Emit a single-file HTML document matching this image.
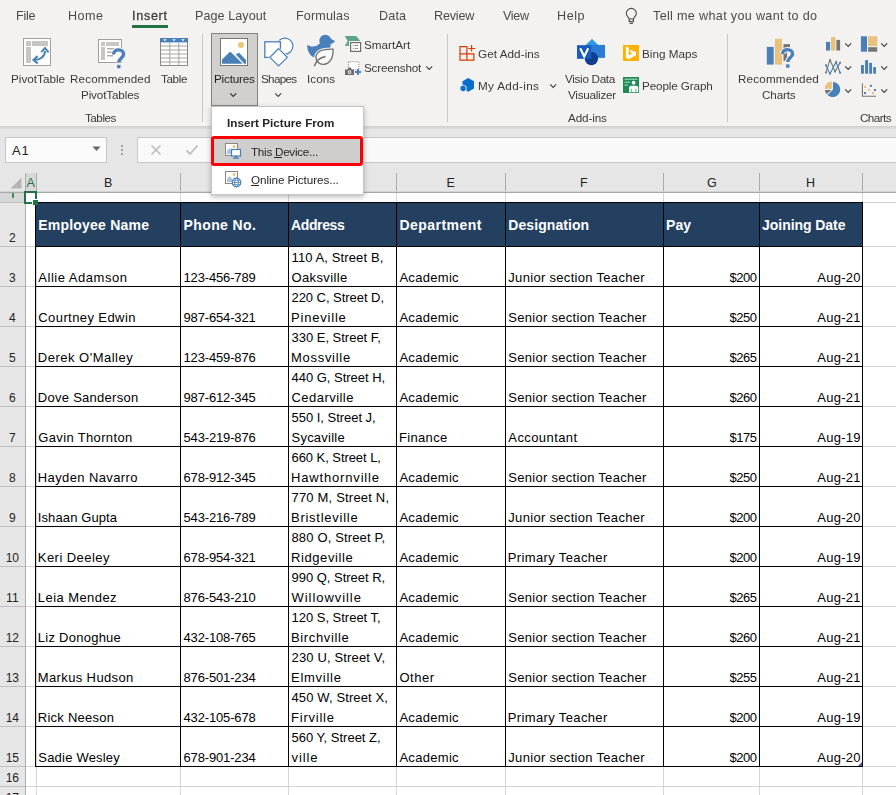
<!DOCTYPE html>
<html><head><meta charset="utf-8"><title>Excel</title>
<style>
html,body{margin:0;padding:0;}
body{width:896px;height:795px;overflow:hidden;position:relative;background:#fff;font-family:'Liberation Sans', sans-serif;}
#root{position:absolute;left:0;top:0;width:896px;height:795px;overflow:hidden;}
</style></head><body><div id="root">
<div style="position:absolute;left:0px;top:0px;width:896px;height:126px;background:#f3f2f1;"></div>
<div style="position:absolute;left:0px;top:126px;width:896px;height:5px;background:linear-gradient(#cfcfcf,#d8d8d8 40%,#e1e1e1);"></div>
<div style="position:absolute;left:0px;top:129px;width:896px;height:63px;background:#e6e6e6;"></div>
<div style="position:absolute;left:0px;top:192px;width:25px;height:603px;background:#e6e6e6;"></div>
<div style="position:absolute;left:25px;top:192px;width:871px;height:603px;background:#fff;"></div>
<div style="position:absolute;left:5px;top:137px;width:102px;height:26px;background:#fbfbfb;border:1px solid #c8c8c8;box-sizing:border-box;"></div>
<svg style="position:absolute;left:92px;top:146px" width="9" height="6"><path d="M0.5 0.5h8l-4 4.5z" fill="#666"/></svg>
<div style="position:absolute;left:121px;top:145px;width:2px;height:2px;background:#a0a0a0;"></div>
<div style="position:absolute;left:121px;top:149px;width:2px;height:2px;background:#a0a0a0;"></div>
<div style="position:absolute;left:121px;top:153px;width:2px;height:2px;background:#a0a0a0;"></div>
<div style="position:absolute;left:137px;top:137px;width:759px;height:26px;background:#f9f9f9;border:1px solid #c8c8c8;border-right:none;box-sizing:border-box;"></div>
<svg style="position:absolute;left:150px;top:144px" width="12" height="12"><path d="M1.5 1.5l9 9M10.5 1.5l-9 9" stroke="#bdbdbd" stroke-width="1.6" fill="none"/></svg>
<svg style="position:absolute;left:185px;top:144px" width="14" height="12"><path d="M1.5 6.5l3.5 3.5l7.5-8.5" stroke="#bdbdbd" stroke-width="1.8" fill="none"/></svg>
<div style="position:absolute;left:25px;top:173px;width:11px;height:19px;background:#d8d8d8;"></div>
<div style="position:absolute;left:25px;top:173px;width:1px;height:19px;background:#ababab;"></div>
<div style="position:absolute;left:36px;top:173px;width:1px;height:19px;background:#ababab;"></div>
<div style="position:absolute;left:180px;top:173px;width:1px;height:19px;background:#ababab;"></div>
<div style="position:absolute;left:288px;top:173px;width:1px;height:19px;background:#ababab;"></div>
<div style="position:absolute;left:396px;top:173px;width:1px;height:19px;background:#ababab;"></div>
<div style="position:absolute;left:505px;top:173px;width:1px;height:19px;background:#ababab;"></div>
<div style="position:absolute;left:663px;top:173px;width:1px;height:19px;background:#ababab;"></div>
<div style="position:absolute;left:759px;top:173px;width:1px;height:19px;background:#ababab;"></div>
<div style="position:absolute;left:862px;top:173px;width:1px;height:19px;background:#ababab;"></div>
<div style="position:absolute;left:0px;top:191px;width:896px;height:1px;background:#d4d4d4;"></div>
<div style="position:absolute;left:0px;top:192px;width:896px;height:1px;background:#a8a8a8;"></div>
<svg style="position:absolute;left:10px;top:177px" width="12" height="12"><path d="M11.5 0.5v11h-11z" fill="#b4b4b4"/></svg>
<div style="position:absolute;left:36px;top:193px;width:1px;height:602px;background:#d4d4d4;"></div>
<div style="position:absolute;left:180px;top:193px;width:1px;height:602px;background:#d4d4d4;"></div>
<div style="position:absolute;left:288px;top:193px;width:1px;height:602px;background:#d4d4d4;"></div>
<div style="position:absolute;left:396px;top:193px;width:1px;height:602px;background:#d4d4d4;"></div>
<div style="position:absolute;left:505px;top:193px;width:1px;height:602px;background:#d4d4d4;"></div>
<div style="position:absolute;left:663px;top:193px;width:1px;height:602px;background:#d4d4d4;"></div>
<div style="position:absolute;left:759px;top:193px;width:1px;height:602px;background:#d4d4d4;"></div>
<div style="position:absolute;left:862px;top:193px;width:1px;height:602px;background:#d4d4d4;"></div>
<div style="position:absolute;left:25px;top:202px;width:871px;height:1px;background:#d4d4d4;"></div>
<div style="position:absolute;left:25px;top:246px;width:871px;height:1px;background:#d4d4d4;"></div>
<div style="position:absolute;left:25px;top:286px;width:871px;height:1px;background:#d4d4d4;"></div>
<div style="position:absolute;left:25px;top:326px;width:871px;height:1px;background:#d4d4d4;"></div>
<div style="position:absolute;left:25px;top:366px;width:871px;height:1px;background:#d4d4d4;"></div>
<div style="position:absolute;left:25px;top:406px;width:871px;height:1px;background:#d4d4d4;"></div>
<div style="position:absolute;left:25px;top:446px;width:871px;height:1px;background:#d4d4d4;"></div>
<div style="position:absolute;left:25px;top:486px;width:871px;height:1px;background:#d4d4d4;"></div>
<div style="position:absolute;left:25px;top:526px;width:871px;height:1px;background:#d4d4d4;"></div>
<div style="position:absolute;left:25px;top:566px;width:871px;height:1px;background:#d4d4d4;"></div>
<div style="position:absolute;left:25px;top:606px;width:871px;height:1px;background:#d4d4d4;"></div>
<div style="position:absolute;left:25px;top:646px;width:871px;height:1px;background:#d4d4d4;"></div>
<div style="position:absolute;left:25px;top:686px;width:871px;height:1px;background:#d4d4d4;"></div>
<div style="position:absolute;left:25px;top:726px;width:871px;height:1px;background:#d4d4d4;"></div>
<div style="position:absolute;left:25px;top:766px;width:871px;height:1px;background:#d4d4d4;"></div>
<div style="position:absolute;left:25px;top:786px;width:871px;height:1px;background:#d4d4d4;"></div>
<div style="position:absolute;left:25px;top:192px;width:1px;height:603px;background:#ababab;"></div>
<div style="position:absolute;left:0px;top:202px;width:25px;height:1px;background:#c0c0c0;"></div>
<div style="position:absolute;left:0px;top:246px;width:25px;height:1px;background:#c0c0c0;"></div>
<div style="position:absolute;left:0px;top:286px;width:25px;height:1px;background:#c0c0c0;"></div>
<div style="position:absolute;left:0px;top:326px;width:25px;height:1px;background:#c0c0c0;"></div>
<div style="position:absolute;left:0px;top:366px;width:25px;height:1px;background:#c0c0c0;"></div>
<div style="position:absolute;left:0px;top:406px;width:25px;height:1px;background:#c0c0c0;"></div>
<div style="position:absolute;left:0px;top:446px;width:25px;height:1px;background:#c0c0c0;"></div>
<div style="position:absolute;left:0px;top:486px;width:25px;height:1px;background:#c0c0c0;"></div>
<div style="position:absolute;left:0px;top:526px;width:25px;height:1px;background:#c0c0c0;"></div>
<div style="position:absolute;left:0px;top:566px;width:25px;height:1px;background:#c0c0c0;"></div>
<div style="position:absolute;left:0px;top:606px;width:25px;height:1px;background:#c0c0c0;"></div>
<div style="position:absolute;left:0px;top:646px;width:25px;height:1px;background:#c0c0c0;"></div>
<div style="position:absolute;left:0px;top:686px;width:25px;height:1px;background:#c0c0c0;"></div>
<div style="position:absolute;left:0px;top:726px;width:25px;height:1px;background:#c0c0c0;"></div>
<div style="position:absolute;left:0px;top:766px;width:25px;height:1px;background:#c0c0c0;"></div>
<div style="position:absolute;left:0px;top:786px;width:25px;height:1px;background:#c0c0c0;"></div>
<div style="position:absolute;left:0px;top:193px;width:25px;height:9px;background:#d6d6d6;"></div>
<div style="position:absolute;left:12px;top:193px;width:2px;height:5px;background:#4c8a62;"></div>
<div style="position:absolute;left:36px;top:203px;width:826px;height:43px;background:#244061;"></div>
<div style="position:absolute;left:35px;top:202px;width:1px;height:565px;background:#000;"></div>
<div style="position:absolute;left:180px;top:202px;width:1px;height:565px;background:#000;"></div>
<div style="position:absolute;left:288px;top:202px;width:1px;height:565px;background:#000;"></div>
<div style="position:absolute;left:396px;top:202px;width:1px;height:565px;background:#000;"></div>
<div style="position:absolute;left:505px;top:202px;width:1px;height:565px;background:#000;"></div>
<div style="position:absolute;left:663px;top:202px;width:1px;height:565px;background:#000;"></div>
<div style="position:absolute;left:759px;top:202px;width:1px;height:565px;background:#000;"></div>
<div style="position:absolute;left:862px;top:202px;width:1px;height:565px;background:#000;"></div>
<div style="position:absolute;left:35px;top:202px;width:828px;height:1px;background:#000;"></div>
<div style="position:absolute;left:35px;top:246px;width:828px;height:1px;background:#000;"></div>
<div style="position:absolute;left:35px;top:286px;width:828px;height:1px;background:#000;"></div>
<div style="position:absolute;left:35px;top:326px;width:828px;height:1px;background:#000;"></div>
<div style="position:absolute;left:35px;top:366px;width:828px;height:1px;background:#000;"></div>
<div style="position:absolute;left:35px;top:406px;width:828px;height:1px;background:#000;"></div>
<div style="position:absolute;left:35px;top:446px;width:828px;height:1px;background:#000;"></div>
<div style="position:absolute;left:35px;top:486px;width:828px;height:1px;background:#000;"></div>
<div style="position:absolute;left:35px;top:526px;width:828px;height:1px;background:#000;"></div>
<div style="position:absolute;left:35px;top:566px;width:828px;height:1px;background:#000;"></div>
<div style="position:absolute;left:35px;top:606px;width:828px;height:1px;background:#000;"></div>
<div style="position:absolute;left:35px;top:646px;width:828px;height:1px;background:#000;"></div>
<div style="position:absolute;left:35px;top:686px;width:828px;height:1px;background:#000;"></div>
<div style="position:absolute;left:35px;top:726px;width:828px;height:1px;background:#000;"></div>
<div style="position:absolute;left:35px;top:766px;width:828px;height:1px;background:#000;"></div>
<div style="position:absolute;left:24px;top:191px;width:9px;height:9px;border:2px solid #217346;background:#fff"></div>
<div style="position:absolute;left:32px;top:199px;width:6px;height:6px;background:#fff;"></div>
<div style="position:absolute;left:33px;top:200px;width:5px;height:5px;background:#217346;"></div>
<svg style="position:absolute;left:858px;top:762px" width="4" height="4"><path d="M4 0v4h-4z" fill="#3a5a9a"/></svg>
<div style="position:absolute;left:132px;top:25px;width:36px;height:3px;background:#217346;"></div>
<svg style="position:absolute;left:625px;top:7px;overflow:visible" width="14" height="18"><path d="M4.200 12C4.200 10.300 1.300 9.400 1.300 6.400A5 5 0 0 1 11.300 6.400C11.300 9.400 8.400 10.300 8.400 12z" fill="none" stroke="#4a4a4a" stroke-width="1.100"/><path d="M4.200 12v2.600h4.200v-2.600M4.700 16.500h3.200" fill="none" stroke="#4a4a4a" stroke-width="1.100"/></svg>
<div style="position:absolute;left:202px;top:34px;width:1px;height:88px;background:#c8c6c4;"></div>
<div style="position:absolute;left:447px;top:34px;width:1px;height:88px;background:#c8c6c4;"></div>
<div style="position:absolute;left:727px;top:34px;width:1px;height:88px;background:#c8c6c4;"></div>
<svg style="position:absolute;left:23px;top:38px;overflow:visible" width="28" height="28"><rect x="0.5" y="0.5" width="27" height="27" fill="#fff" stroke="#a19f9d"/>
<rect x="3" y="3" width="5" height="5" fill="#c8c6c4"/><rect x="9" y="3" width="16" height="5" fill="#c8c6c4"/><rect x="3" y="9" width="5" height="16" fill="#c8c6c4"/>
<path d="M11 22c6 0 11-3 11-9" fill="none" stroke="#4980b9" stroke-width="2"/><path d="M18.2 14.2l3.8-4.2l3.6 4.4" fill="none" stroke="#4980b9" stroke-width="2"/><path d="M14.6 18l-4.2 4l4.4 3.4" fill="none" stroke="#4980b9" stroke-width="2"/></svg>
<svg style="position:absolute;left:98px;top:39px;overflow:visible" width="30" height="30"><rect x="0.5" y="0.5" width="23" height="23" fill="#fff" stroke="#a19f9d"/>
<rect x="3" y="3" width="4" height="4" fill="#c8c6c4"/><rect x="8" y="3" width="13" height="4" fill="#c8c6c4"/><rect x="3" y="8" width="4" height="13" fill="#c8c6c4"/>
<rect x="9" y="9" width="10" height="1.5" fill="#b0aeac"/><rect x="9" y="12.5" width="8" height="1.5" fill="#b0aeac"/><rect x="9" y="16" width="6" height="1.5" fill="#b0aeac"/>
<g transform="translate(13.6 9.3) scale(1.000 1.000)"><path d="M2 6.2C2 2.8 4.4 1.6 7 1.6C9.8 1.6 12 3.2 12 6C12 9.6 7.2 9.8 7.2 14.2" fill="none" stroke="#f3f2f1" stroke-width="5.4"/><rect x="4.2" y="15.4" width="6" height="5.6" fill="#f3f2f1"/><path d="M2 6.2C2 2.8 4.4 1.6 7 1.6C9.8 1.6 12 3.2 12 6C12 9.6 7.2 9.8 7.2 14.2" fill="none" stroke="#4980b9" stroke-width="3.3"/><rect x="5.5" y="16.6" width="3.4" height="3.4" fill="#4980b9"/></g></svg>
<svg style="position:absolute;left:160px;top:38px;overflow:visible" width="28" height="28"><rect x="0.5" y="0.5" width="27" height="27" fill="#fff" stroke="#8a8886"/><rect x="0" y="0" width="28" height="4.4" fill="#4980b9"/><rect x="9.3" y="4.4" width="1" height="23" fill="#a6a4a2"/><rect x="18.3" y="4.4" width="1" height="23" fill="#a6a4a2"/><rect x="1" y="7.5" width="26" height="1" fill="#a6a4a2"/><rect x="1" y="11.5" width="26" height="1" fill="#a6a4a2"/><rect x="1" y="15.5" width="26" height="1" fill="#a6a4a2"/><rect x="1" y="19.5" width="26" height="1" fill="#a6a4a2"/><rect x="1" y="23.5" width="26" height="1" fill="#a6a4a2"/><path d="M3.2 1.3h3.4l-1.7 2z" fill="#fff"/><path d="M12.3 1.3h3.4l-1.7 2z" fill="#fff"/><path d="M21.3 1.3h3.4l-1.7 2z" fill="#fff"/></svg>
<div style="position:absolute;left:211px;top:33px;width:47px;height:73px;background:#d2d0ce;border:1px solid #838180;box-sizing:border-box;"></div>
<svg style="position:absolute;left:230.10000000000002px;top:92.8px;overflow:visible" width="6.4" height="3.6"><path d="M0.200 0.300l3 3l3-3" stroke="#333" stroke-width="1.200" fill="none"/></svg>
<svg style="position:absolute;left:220px;top:38px;overflow:visible" width="28" height="28"><rect x="0.5" y="0.5" width="27" height="27" fill="#fff" stroke="#767574"/>
<circle cx="21" cy="7" r="3" fill="#eac675"/>
<path d="M2 25.8V21.4L9.7 13.9h1L22.7 25.800z" fill="#4980b9"/><path d="M15.800 16.300L18.500 14.900h0.800L26 22V25.800H24.200z" fill="#4980b9"/></svg>
<svg style="position:absolute;left:275.2px;top:92.8px;overflow:visible" width="6.4" height="3.6"><path d="M0.200 0.300l3 3l3-3" stroke="#444" stroke-width="1.200" fill="none"/></svg>
<svg style="position:absolute;left:262px;top:36px;overflow:visible" width="34" height="32"><circle cx="22.900" cy="10.100" r="8" fill="#fff" stroke="#4980b9" stroke-width="1.200"/>
<rect x="1.600" y="4.600" width="18" height="18" fill="#f3f2f1"/>
<rect x="2.800" y="5.800" width="15.600" height="15.600" fill="#fff" stroke="#4980b9" stroke-width="1.300"/>
<path d="M16.600 11l10.300 10.300l-10.300 10.300l-10.300-10.300z" fill="#f3f2f1"/>
<path d="M16.600 12.600l8.700 8.700l-8.700 8.700l-8.700-8.700z" fill="#fff" stroke="#4980b9" stroke-width="1.200"/></svg>
<svg style="position:absolute;left:305px;top:35px;overflow:visible" width="32" height="34"><circle cx="20.300" cy="5.700" r="6" fill="#4980b9"/><path d="M25 3.200l5.200 3l-4.700 3.600z" fill="#4980b9"/>
<path d="M2.200 9.500C6 12.600 11.500 12.200 14.800 8.300L25.500 9C26 13 24 17.500 21 20C17 23.500 10 24 6.500 21C3.500 18.200 2 14 2.200 9.500z" fill="#4980b9"/>
<path d="M28 14.200C20 14 11.500 15.500 11 22C10.800 26 14 29.500 18.500 29.300C25 29 28.700 22 28 14.200z" fill="#f6f5f4" stroke="#f3f2f1" stroke-width="3.600"/>
<path d="M8.800 32C10.500 27 13 24 16 22.500" fill="none" stroke="#f3f2f1" stroke-width="3.200"/>
<path d="M28 14.200C20 14 11.500 15.500 11 22C10.800 26 14 29.500 18.500 29.300C25 29 28.700 22 28 14.200z" fill="#f9f8f8" stroke="#6e6d6c" stroke-width="1.300"/>
<path d="M9.300 31.300C11 26 15 22.500 20.500 21.500" fill="none" stroke="#6e6d6c" stroke-width="1.400"/></svg>
<svg style="position:absolute;left:345px;top:36px;overflow:visible" width="17" height="16"><path d="M-0.200 0.100H11L15 4.500V10H-0.200L2.600 5z" fill="#5ca58c"/>
<rect x="4" y="5" width="13.500" height="12" fill="#f3f2f1"/>
<rect x="5.600" y="6.600" width="10" height="8.800" fill="#fff" stroke="#6e6d6c" stroke-width="1.200"/>
<rect x="7.900" y="9" width="1.100" height="1" fill="#8a8886"/><rect x="10" y="9" width="3.200" height="1" fill="#8a8886"/><rect x="7.900" y="11.900" width="1.100" height="1" fill="#8a8886"/><rect x="10" y="11.900" width="3.200" height="1" fill="#8a8886"/></svg>
<svg style="position:absolute;left:345px;top:60px;overflow:visible" width="17" height="16"><rect x="3.400" y="1.800" width="10.400" height="8" fill="#fff" stroke="#8a8886" stroke-width="1" stroke-dasharray="1 1.090"/>
<path d="M0 9.400h2.600l0.800-2h2.400l0.800 2h2.400v5.600h-9z" fill="#6b6a69" stroke="#f3f2f1" stroke-width="0.600" paint-order="stroke"/><circle cx="4.500" cy="12.100" r="1.900" fill="#f3f2f1"/><circle cx="4.500" cy="12.100" r="0.900" fill="#6b6a69"/>
<path d="M13 9v6M10 12h6" stroke="#4980b9" stroke-width="2"/></svg>
<svg style="position:absolute;left:425.6px;top:66.1px;overflow:visible" width="6.4" height="3.6"><path d="M0.200 0.300l3 3l3-3" stroke="#444" stroke-width="1.200" fill="none"/></svg>
<svg style="position:absolute;left:458.5px;top:45px;overflow:visible" width="17" height="16"><path d="M1 1.700H7.900V15.200H1zM1 8.800H14.900V15.200H7.900" fill="none" stroke="#d83b01" stroke-width="1.200"/>
<path d="M12.600 0V6.600M9.300 3.500h7" stroke="#d83b01" stroke-width="1.200"/></svg>
<svg style="position:absolute;left:459px;top:77px;overflow:visible" width="16" height="16"><path d="M9.200 1l5.800 3.200v7.300l-5.800 3.300l-5.700-3.300v-7.300z" fill="#0a6fcb"/>
<path d="M4.100 7.900l3.100 1.750v3.500l-3.100 1.750l-3.100-1.750v-3.500z" fill="#0a6fcb" stroke="#f3f2f1" stroke-width="0.900"/></svg>
<svg style="position:absolute;left:549.9px;top:84.3px;overflow:visible" width="6.4" height="3.6"><path d="M0.200 0.300l3 3l3-3" stroke="#444" stroke-width="1.200" fill="none"/></svg>
<svg style="position:absolute;left:576px;top:38px;overflow:visible" width="30" height="28"><path d="M15.900 0.900l6.400 6.400l-6.400 6.400l-6.400-6.400z" fill="#2f9be6"/>
<rect x="15.400" y="6.900" width="13.600" height="13" fill="#2b7cd3"/><path d="M15.900 0.900l6.200 6h-6.700z" fill="#2f9be6"/>
<circle cx="15.400" cy="20.500" r="6.700" fill="#103f91"/>
<rect x="1" y="7.200" width="14.400" height="13.600" fill="#185abd"/>
<path d="M4.200 10.200l4 8.300l4-8.300" fill="none" stroke="#fff" stroke-width="2.100"/></svg>
<svg style="position:absolute;left:623px;top:45px;overflow:visible" width="16" height="16"><rect width="16" height="16" fill="#ffb300"/><path d="M2.900 1.600L5.700 2.600V10.200L9.500 8.500L7.700 7.600L6.500 4.800L12.900 7.100V10.200L5.700 14.300L2.900 12.800z" fill="#fff"/></svg>
<svg style="position:absolute;left:623px;top:77px;overflow:visible" width="16" height="16"><rect width="16" height="16" fill="#1f8a55"/><rect x="1.500" y="1.600" width="13" height="1.300" fill="#8fd0ad"/><rect x="1.500" y="4.600" width="5.500" height="1.300" fill="#8fd0ad"/><rect x="1.500" y="7.400" width="3.500" height="1.300" fill="#8fd0ad"/>
<circle cx="10.600" cy="5.700" r="1.900" fill="#fff"/><path d="M6 15.200v-4c0-1.600 1-2.400 2.300-2.400h4.600c1.300 0 2.300 0.800 2.300 2.400v4z" fill="#fff"/><path d="M8.300 15.200v-3.500M12.900 15.200v-3.500" stroke="#1f8a55" stroke-width="0.700"/></svg>
<svg style="position:absolute;left:766px;top:38px;overflow:visible" width="30" height="30"><rect x="0.800" y="8.900" width="6.900" height="17.700" fill="#4980b9"/><rect x="8.900" y="0.800" width="7.100" height="25.800" fill="#eac17a"/><rect x="17.500" y="6.100" width="6.500" height="3" fill="#767574"/><rect x="17.500" y="9" width="3.500" height="14" fill="#767574"/><g transform="translate(14.5 10) scale(1.007 0.985)"><path d="M2 6.2C2 2.8 4.4 1.6 7 1.6C9.8 1.6 12 3.2 12 6C12 9.6 7.2 9.8 7.2 14.2" fill="none" stroke="#f3f2f1" stroke-width="5.4"/><rect x="4.2" y="15.4" width="6" height="5.6" fill="#f3f2f1"/><path d="M2 6.2C2 2.8 4.4 1.6 7 1.6C9.8 1.6 12 3.2 12 6C12 9.6 7.2 9.8 7.2 14.2" fill="none" stroke="#4980b9" stroke-width="3.3"/><rect x="5.5" y="16.6" width="3.4" height="3.4" fill="#4980b9"/></g></svg>
<svg style="position:absolute;left:825px;top:36px;overflow:visible" width="16" height="16"><rect x="1" y="5.900" width="4.100" height="8.600" fill="#4980b9"/><rect x="6" y="1" width="4.400" height="13.500" fill="#eac17a"/><rect x="11.400" y="3.900" width="3.700" height="10.600" fill="#767574"/></svg>
<svg style="position:absolute;left:861px;top:36px;overflow:visible" width="17" height="16"><rect x="-0.100" y="0.250" width="6.100" height="15.450" fill="#4980b9"/><rect x="7.100" y="0.250" width="9.100" height="9.750" fill="#eac17a"/><rect x="7.100" y="11.200" width="9.100" height="4.500" fill="#767574"/></svg>
<svg style="position:absolute;left:825px;top:59px;overflow:visible" width="16" height="16"><path d="M0.800 13.800L5 0.900L10.100 12.800L15.200 3.500" fill="none" stroke="#767574" stroke-width="1.100"/><path d="M0.800 6L5 14.900L11.100 2.800L15.200 14.100" fill="none" stroke="#4980b9" stroke-width="1.200"/><rect x="0.0" y="12.7" width="1.800" height="1.800" fill="#767574"/><rect x="4.1" y="0.4" width="1.800" height="1.800" fill="#767574"/><rect x="9.2" y="11.5" width="1.800" height="1.800" fill="#767574"/><rect x="14.2" y="2.8000000000000003" width="1.800" height="1.800" fill="#767574"/><rect x="0.0" y="5.3" width="1.800" height="1.800" fill="#4980b9"/><rect x="4.1" y="13.6" width="1.800" height="1.800" fill="#4980b9"/><rect x="10.2" y="2.3000000000000003" width="1.800" height="1.800" fill="#4980b9"/><rect x="14.2" y="12.9" width="1.800" height="1.800" fill="#4980b9"/></svg>
<svg style="position:absolute;left:861px;top:59px;overflow:visible" width="16" height="16"><rect x="0" y="6" width="2.900" height="8.700" fill="#4980b9"/><rect x="4.100" y="1.100" width="3" height="13.600" fill="#4980b9"/><rect x="8.200" y="3.900" width="2.800" height="10.800" fill="#4980b9"/><rect x="12.200" y="8.100" width="2.800" height="6.600" fill="#4980b9"/></svg>
<svg style="position:absolute;left:825px;top:82px;overflow:visible" width="16" height="16"><path d="M8 7.600V-0.100A7.600 7.600 0 1 1 2.500 13.100z" fill="#4980b9"/><path d="M6.900 6.700V-0.600A7.400 7.400 0 0 0 -0.400 6.700z" fill="#eac17a"/><path d="M6.400 8H-0.200A7.600 7.600 0 0 0 1.700 12.300z" fill="#767574"/></svg>
<svg style="position:absolute;left:861px;top:82px;overflow:visible" width="16" height="16"><path d="M1.400 1.300V14.200H15" fill="none" stroke="#767574" stroke-width="1.100"/><rect x="3.0" y="3.9" width="2" height="2" fill="#eac17a"/><rect x="8.9" y="2.8" width="2" height="2" fill="#4980b9"/><rect x="6.9" y="7.0" width="2" height="2" fill="#eac17a"/><rect x="13.0" y="7.0" width="2" height="2" fill="#4980b9"/><rect x="3.0" y="10.0" width="2" height="2" fill="#4980b9"/><rect x="11.0" y="10.0" width="2" height="2" fill="#eac17a"/></svg>
<svg style="position:absolute;left:845.3px;top:42.8px;overflow:visible" width="6.4" height="3.6"><path d="M0.200 0.300l3 3l3-3" stroke="#444" stroke-width="1.200" fill="none"/></svg>
<svg style="position:absolute;left:881.3px;top:42.8px;overflow:visible" width="6.4" height="3.6"><path d="M0.200 0.300l3 3l3-3" stroke="#444" stroke-width="1.200" fill="none"/></svg>
<svg style="position:absolute;left:845.3px;top:65.7px;overflow:visible" width="6.4" height="3.6"><path d="M0.200 0.300l3 3l3-3" stroke="#444" stroke-width="1.200" fill="none"/></svg>
<svg style="position:absolute;left:881.3px;top:65.7px;overflow:visible" width="6.4" height="3.6"><path d="M0.200 0.300l3 3l3-3" stroke="#444" stroke-width="1.200" fill="none"/></svg>
<svg style="position:absolute;left:845.3px;top:88.6px;overflow:visible" width="6.4" height="3.6"><path d="M0.200 0.300l3 3l3-3" stroke="#444" stroke-width="1.200" fill="none"/></svg>
<svg style="position:absolute;left:881.3px;top:88.6px;overflow:visible" width="6.4" height="3.6"><path d="M0.200 0.300l3 3l3-3" stroke="#444" stroke-width="1.200" fill="none"/></svg>
<span style="position:absolute;left:12.00px;top:142.00px;font:normal 13px/18px 'Liberation Sans', sans-serif;color:#222;white-space:pre;letter-spacing:0.829px;">A1</span>
<span style="position:absolute;left:26.50px;top:173.87px;font:normal 12.5px/18px 'Liberation Sans', sans-serif;color:#217346;white-space:pre;letter-spacing:0.000px;">A</span>
<span style="position:absolute;left:104.00px;top:173.87px;font:normal 12.5px/18px 'Liberation Sans', sans-serif;color:#222;white-space:pre;letter-spacing:0.000px;">B</span>
<span style="position:absolute;left:230.00px;top:173.87px;font:normal 12.5px/18px 'Liberation Sans', sans-serif;color:#222;white-space:pre;letter-spacing:0.000px;">C</span>
<span style="position:absolute;left:337.50px;top:173.87px;font:normal 12.5px/18px 'Liberation Sans', sans-serif;color:#222;white-space:pre;letter-spacing:0.000px;">D</span>
<span style="position:absolute;left:446.50px;top:173.87px;font:normal 12.5px/18px 'Liberation Sans', sans-serif;color:#222;white-space:pre;letter-spacing:0.000px;">E</span>
<span style="position:absolute;left:580.00px;top:173.87px;font:normal 12.5px/18px 'Liberation Sans', sans-serif;color:#222;white-space:pre;letter-spacing:0.000px;">F</span>
<span style="position:absolute;left:707.00px;top:173.87px;font:normal 12.5px/18px 'Liberation Sans', sans-serif;color:#222;white-space:pre;letter-spacing:0.000px;">G</span>
<span style="position:absolute;left:806.00px;top:173.87px;font:normal 12.5px/18px 'Liberation Sans', sans-serif;color:#222;white-space:pre;letter-spacing:0.000px;">H</span>
<span style="position:absolute;left:9.00px;top:229.14px;font:normal 12px/18px 'Liberation Sans', sans-serif;color:#222;white-space:pre;letter-spacing:0.000px;">2</span>
<span style="position:absolute;left:9.00px;top:269.14px;font:normal 12px/18px 'Liberation Sans', sans-serif;color:#222;white-space:pre;letter-spacing:0.000px;">3</span>
<span style="position:absolute;left:9.00px;top:309.14px;font:normal 12px/18px 'Liberation Sans', sans-serif;color:#222;white-space:pre;letter-spacing:0.000px;">4</span>
<span style="position:absolute;left:9.00px;top:349.14px;font:normal 12px/18px 'Liberation Sans', sans-serif;color:#222;white-space:pre;letter-spacing:0.000px;">5</span>
<span style="position:absolute;left:9.00px;top:389.14px;font:normal 12px/18px 'Liberation Sans', sans-serif;color:#222;white-space:pre;letter-spacing:0.000px;">6</span>
<span style="position:absolute;left:9.00px;top:429.14px;font:normal 12px/18px 'Liberation Sans', sans-serif;color:#222;white-space:pre;letter-spacing:0.000px;">7</span>
<span style="position:absolute;left:9.00px;top:469.14px;font:normal 12px/18px 'Liberation Sans', sans-serif;color:#222;white-space:pre;letter-spacing:0.000px;">8</span>
<span style="position:absolute;left:9.00px;top:509.14px;font:normal 12px/18px 'Liberation Sans', sans-serif;color:#222;white-space:pre;letter-spacing:0.000px;">9</span>
<span style="position:absolute;left:5.66px;top:549.14px;font:normal 12px/18px 'Liberation Sans', sans-serif;color:#222;white-space:pre;letter-spacing:0.000px;">10</span>
<span style="position:absolute;left:6.11px;top:589.14px;font:normal 12px/18px 'Liberation Sans', sans-serif;color:#222;white-space:pre;letter-spacing:0.000px;">11</span>
<span style="position:absolute;left:5.66px;top:629.14px;font:normal 12px/18px 'Liberation Sans', sans-serif;color:#222;white-space:pre;letter-spacing:0.000px;">12</span>
<span style="position:absolute;left:5.66px;top:669.14px;font:normal 12px/18px 'Liberation Sans', sans-serif;color:#222;white-space:pre;letter-spacing:0.000px;">13</span>
<span style="position:absolute;left:5.66px;top:709.14px;font:normal 12px/18px 'Liberation Sans', sans-serif;color:#222;white-space:pre;letter-spacing:0.000px;">14</span>
<span style="position:absolute;left:5.66px;top:749.14px;font:normal 12px/18px 'Liberation Sans', sans-serif;color:#222;white-space:pre;letter-spacing:0.000px;">15</span>
<span style="position:absolute;left:5.66px;top:769.14px;font:normal 12px/18px 'Liberation Sans', sans-serif;color:#222;white-space:pre;letter-spacing:0.000px;">16</span>
<span style="position:absolute;left:5.66px;top:789.14px;font:normal 12px/18px 'Liberation Sans', sans-serif;color:#222;white-space:pre;letter-spacing:0.000px;">17</span>
<span style="position:absolute;left:38.20px;top:216.15px;font:bold 14px/18px 'Liberation Sans', sans-serif;color:#fff;white-space:pre;letter-spacing:0.219px;">Employee Name</span>
<span style="position:absolute;left:183.50px;top:216.15px;font:bold 14px/18px 'Liberation Sans', sans-serif;color:#fff;white-space:pre;letter-spacing:0.396px;">Phone No.</span>
<span style="position:absolute;left:291.00px;top:216.15px;font:bold 14px/18px 'Liberation Sans', sans-serif;color:#fff;white-space:pre;letter-spacing:-0.372px;">Address</span>
<span style="position:absolute;left:399.50px;top:216.15px;font:bold 14px/18px 'Liberation Sans', sans-serif;color:#fff;white-space:pre;letter-spacing:0.458px;">Department</span>
<span style="position:absolute;left:508.30px;top:216.15px;font:bold 14px/18px 'Liberation Sans', sans-serif;color:#fff;white-space:pre;letter-spacing:0.073px;">Designation</span>
<span style="position:absolute;left:666.10px;top:216.15px;font:bold 14px/18px 'Liberation Sans', sans-serif;color:#fff;white-space:pre;letter-spacing:0.038px;">Pay</span>
<span style="position:absolute;left:762.10px;top:216.15px;font:bold 14px/18px 'Liberation Sans', sans-serif;color:#fff;white-space:pre;letter-spacing:-0.056px;">Joining Date</span>
<span style="position:absolute;left:38.30px;top:269.30px;font:normal 13px/18px 'Liberation Sans', sans-serif;color:#000;white-space:pre;letter-spacing:0.519px;">Allie Adamson</span>
<span style="position:absolute;left:183.50px;top:269.30px;font:normal 13px/18px 'Liberation Sans', sans-serif;color:#000;white-space:pre;letter-spacing:-0.150px;">123-456-789</span>
<span style="position:absolute;left:291.50px;top:249.10px;font:normal 13px/18px 'Liberation Sans', sans-serif;color:#000;white-space:pre;letter-spacing:0.113px;">110 A, Street B,</span>
<span style="position:absolute;left:291.50px;top:269.30px;font:normal 13px/18px 'Liberation Sans', sans-serif;color:#000;white-space:pre;letter-spacing:0.362px;">Oaksville</span>
<span style="position:absolute;left:399.40px;top:269.30px;font:normal 13px/18px 'Liberation Sans', sans-serif;color:#000;white-space:pre;letter-spacing:0.303px;">Academic</span>
<span style="position:absolute;left:508.30px;top:269.30px;font:normal 13px/18px 'Liberation Sans', sans-serif;color:#000;white-space:pre;letter-spacing:0.308px;">Junior section Teacher</span>
<span style="position:absolute;left:729.40px;top:269.30px;font:normal 13px/18px 'Liberation Sans', sans-serif;color:#000;white-space:pre;letter-spacing:-0.430px;">$200</span>
<span style="position:absolute;left:817.30px;top:269.30px;font:normal 13px/18px 'Liberation Sans', sans-serif;color:#000;white-space:pre;letter-spacing:0.262px;">Aug-20</span>
<span style="position:absolute;left:38.30px;top:309.30px;font:normal 13px/18px 'Liberation Sans', sans-serif;color:#000;white-space:pre;letter-spacing:0.412px;">Courtney Edwin</span>
<span style="position:absolute;left:183.50px;top:309.30px;font:normal 13px/18px 'Liberation Sans', sans-serif;color:#000;white-space:pre;letter-spacing:-0.150px;">987-654-321</span>
<span style="position:absolute;left:291.50px;top:289.10px;font:normal 13px/18px 'Liberation Sans', sans-serif;color:#000;white-space:pre;letter-spacing:-0.046px;">220 C, Street D,</span>
<span style="position:absolute;left:291.00px;top:309.30px;font:normal 13px/18px 'Liberation Sans', sans-serif;color:#000;white-space:pre;letter-spacing:0.802px;">Pineville</span>
<span style="position:absolute;left:399.40px;top:309.30px;font:normal 13px/18px 'Liberation Sans', sans-serif;color:#000;white-space:pre;letter-spacing:0.303px;">Academic</span>
<span style="position:absolute;left:508.30px;top:309.30px;font:normal 13px/18px 'Liberation Sans', sans-serif;color:#000;white-space:pre;letter-spacing:0.285px;">Senior section Teacher</span>
<span style="position:absolute;left:729.40px;top:309.30px;font:normal 13px/18px 'Liberation Sans', sans-serif;color:#000;white-space:pre;letter-spacing:-0.430px;">$250</span>
<span style="position:absolute;left:817.30px;top:309.30px;font:normal 13px/18px 'Liberation Sans', sans-serif;color:#000;white-space:pre;letter-spacing:0.262px;">Aug-21</span>
<span style="position:absolute;left:37.80px;top:349.30px;font:normal 13px/18px 'Liberation Sans', sans-serif;color:#000;white-space:pre;letter-spacing:0.496px;">Derek O'Malley</span>
<span style="position:absolute;left:183.50px;top:349.30px;font:normal 13px/18px 'Liberation Sans', sans-serif;color:#000;white-space:pre;letter-spacing:-0.150px;">123-459-876</span>
<span style="position:absolute;left:291.50px;top:329.10px;font:normal 13px/18px 'Liberation Sans', sans-serif;color:#000;white-space:pre;letter-spacing:-0.013px;">330 E, Street F,</span>
<span style="position:absolute;left:291.00px;top:349.30px;font:normal 13px/18px 'Liberation Sans', sans-serif;color:#000;white-space:pre;letter-spacing:0.710px;">Mossville</span>
<span style="position:absolute;left:399.40px;top:349.30px;font:normal 13px/18px 'Liberation Sans', sans-serif;color:#000;white-space:pre;letter-spacing:0.303px;">Academic</span>
<span style="position:absolute;left:508.30px;top:349.30px;font:normal 13px/18px 'Liberation Sans', sans-serif;color:#000;white-space:pre;letter-spacing:0.285px;">Senior section Teacher</span>
<span style="position:absolute;left:729.40px;top:349.30px;font:normal 13px/18px 'Liberation Sans', sans-serif;color:#000;white-space:pre;letter-spacing:-0.430px;">$265</span>
<span style="position:absolute;left:817.30px;top:349.30px;font:normal 13px/18px 'Liberation Sans', sans-serif;color:#000;white-space:pre;letter-spacing:0.262px;">Aug-21</span>
<span style="position:absolute;left:37.80px;top:389.30px;font:normal 13px/18px 'Liberation Sans', sans-serif;color:#000;white-space:pre;letter-spacing:0.276px;">Dove Sanderson</span>
<span style="position:absolute;left:183.50px;top:389.30px;font:normal 13px/18px 'Liberation Sans', sans-serif;color:#000;white-space:pre;letter-spacing:-0.150px;">987-612-345</span>
<span style="position:absolute;left:291.50px;top:369.10px;font:normal 13px/18px 'Liberation Sans', sans-serif;color:#000;white-space:pre;letter-spacing:-0.015px;">440 G, Street H,</span>
<span style="position:absolute;left:291.50px;top:389.30px;font:normal 13px/18px 'Liberation Sans', sans-serif;color:#000;white-space:pre;letter-spacing:0.459px;">Cedarville</span>
<span style="position:absolute;left:399.40px;top:389.30px;font:normal 13px/18px 'Liberation Sans', sans-serif;color:#000;white-space:pre;letter-spacing:0.303px;">Academic</span>
<span style="position:absolute;left:508.30px;top:389.30px;font:normal 13px/18px 'Liberation Sans', sans-serif;color:#000;white-space:pre;letter-spacing:0.285px;">Senior section Teacher</span>
<span style="position:absolute;left:729.40px;top:389.30px;font:normal 13px/18px 'Liberation Sans', sans-serif;color:#000;white-space:pre;letter-spacing:-0.430px;">$260</span>
<span style="position:absolute;left:817.30px;top:389.30px;font:normal 13px/18px 'Liberation Sans', sans-serif;color:#000;white-space:pre;letter-spacing:0.262px;">Aug-21</span>
<span style="position:absolute;left:38.30px;top:429.30px;font:normal 13px/18px 'Liberation Sans', sans-serif;color:#000;white-space:pre;letter-spacing:0.348px;">Gavin Thornton</span>
<span style="position:absolute;left:183.50px;top:429.30px;font:normal 13px/18px 'Liberation Sans', sans-serif;color:#000;white-space:pre;letter-spacing:-0.150px;">543-219-876</span>
<span style="position:absolute;left:291.50px;top:409.10px;font:normal 13px/18px 'Liberation Sans', sans-serif;color:#000;white-space:pre;letter-spacing:-0.022px;">550 I, Street J,</span>
<span style="position:absolute;left:291.50px;top:429.30px;font:normal 13px/18px 'Liberation Sans', sans-serif;color:#000;white-space:pre;letter-spacing:0.229px;">Sycaville</span>
<span style="position:absolute;left:398.90px;top:429.30px;font:normal 13px/18px 'Liberation Sans', sans-serif;color:#000;white-space:pre;letter-spacing:0.347px;">Finance</span>
<span style="position:absolute;left:508.30px;top:429.30px;font:normal 13px/18px 'Liberation Sans', sans-serif;color:#000;white-space:pre;letter-spacing:0.419px;">Accountant</span>
<span style="position:absolute;left:729.40px;top:429.30px;font:normal 13px/18px 'Liberation Sans', sans-serif;color:#000;white-space:pre;letter-spacing:-0.430px;">$175</span>
<span style="position:absolute;left:817.30px;top:429.30px;font:normal 13px/18px 'Liberation Sans', sans-serif;color:#000;white-space:pre;letter-spacing:0.262px;">Aug-19</span>
<span style="position:absolute;left:37.80px;top:469.30px;font:normal 13px/18px 'Liberation Sans', sans-serif;color:#000;white-space:pre;letter-spacing:0.383px;">Hayden Navarro</span>
<span style="position:absolute;left:183.50px;top:469.30px;font:normal 13px/18px 'Liberation Sans', sans-serif;color:#000;white-space:pre;letter-spacing:-0.150px;">678-912-345</span>
<span style="position:absolute;left:291.50px;top:449.10px;font:normal 13px/18px 'Liberation Sans', sans-serif;color:#000;white-space:pre;letter-spacing:-0.061px;">660 K, Street L,</span>
<span style="position:absolute;left:291.00px;top:469.30px;font:normal 13px/18px 'Liberation Sans', sans-serif;color:#000;white-space:pre;letter-spacing:0.833px;">Hawthornville</span>
<span style="position:absolute;left:399.40px;top:469.30px;font:normal 13px/18px 'Liberation Sans', sans-serif;color:#000;white-space:pre;letter-spacing:0.303px;">Academic</span>
<span style="position:absolute;left:508.30px;top:469.30px;font:normal 13px/18px 'Liberation Sans', sans-serif;color:#000;white-space:pre;letter-spacing:0.285px;">Senior section Teacher</span>
<span style="position:absolute;left:729.40px;top:469.30px;font:normal 13px/18px 'Liberation Sans', sans-serif;color:#000;white-space:pre;letter-spacing:-0.430px;">$250</span>
<span style="position:absolute;left:817.30px;top:469.30px;font:normal 13px/18px 'Liberation Sans', sans-serif;color:#000;white-space:pre;letter-spacing:0.262px;">Aug-21</span>
<span style="position:absolute;left:37.80px;top:509.30px;font:normal 13px/18px 'Liberation Sans', sans-serif;color:#000;white-space:pre;letter-spacing:0.107px;">Ishaan Gupta</span>
<span style="position:absolute;left:183.50px;top:509.30px;font:normal 13px/18px 'Liberation Sans', sans-serif;color:#000;white-space:pre;letter-spacing:-0.150px;">543-216-789</span>
<span style="position:absolute;left:291.50px;top:489.10px;font:normal 13px/18px 'Liberation Sans', sans-serif;color:#000;white-space:pre;letter-spacing:0.191px;">770 M, Street N,</span>
<span style="position:absolute;left:291.00px;top:509.30px;font:normal 13px/18px 'Liberation Sans', sans-serif;color:#000;white-space:pre;letter-spacing:0.738px;">Bristleville</span>
<span style="position:absolute;left:399.40px;top:509.30px;font:normal 13px/18px 'Liberation Sans', sans-serif;color:#000;white-space:pre;letter-spacing:0.303px;">Academic</span>
<span style="position:absolute;left:508.30px;top:509.30px;font:normal 13px/18px 'Liberation Sans', sans-serif;color:#000;white-space:pre;letter-spacing:0.308px;">Junior section Teacher</span>
<span style="position:absolute;left:729.40px;top:509.30px;font:normal 13px/18px 'Liberation Sans', sans-serif;color:#000;white-space:pre;letter-spacing:-0.430px;">$200</span>
<span style="position:absolute;left:817.30px;top:509.30px;font:normal 13px/18px 'Liberation Sans', sans-serif;color:#000;white-space:pre;letter-spacing:0.262px;">Aug-20</span>
<span style="position:absolute;left:37.80px;top:549.30px;font:normal 13px/18px 'Liberation Sans', sans-serif;color:#000;white-space:pre;letter-spacing:0.450px;">Keri Deeley</span>
<span style="position:absolute;left:183.50px;top:549.30px;font:normal 13px/18px 'Liberation Sans', sans-serif;color:#000;white-space:pre;letter-spacing:-0.150px;">678-954-321</span>
<span style="position:absolute;left:291.50px;top:529.10px;font:normal 13px/18px 'Liberation Sans', sans-serif;color:#000;white-space:pre;letter-spacing:0.145px;">880 O, Street P,</span>
<span style="position:absolute;left:291.00px;top:549.30px;font:normal 13px/18px 'Liberation Sans', sans-serif;color:#000;white-space:pre;letter-spacing:0.585px;">Ridgeville</span>
<span style="position:absolute;left:399.40px;top:549.30px;font:normal 13px/18px 'Liberation Sans', sans-serif;color:#000;white-space:pre;letter-spacing:0.303px;">Academic</span>
<span style="position:absolute;left:507.80px;top:549.30px;font:normal 13px/18px 'Liberation Sans', sans-serif;color:#000;white-space:pre;letter-spacing:0.364px;">Primary Teacher</span>
<span style="position:absolute;left:729.40px;top:549.30px;font:normal 13px/18px 'Liberation Sans', sans-serif;color:#000;white-space:pre;letter-spacing:-0.430px;">$200</span>
<span style="position:absolute;left:817.30px;top:549.30px;font:normal 13px/18px 'Liberation Sans', sans-serif;color:#000;white-space:pre;letter-spacing:0.262px;">Aug-19</span>
<span style="position:absolute;left:37.80px;top:589.30px;font:normal 13px/18px 'Liberation Sans', sans-serif;color:#000;white-space:pre;letter-spacing:0.436px;">Leia Mendez</span>
<span style="position:absolute;left:183.50px;top:589.30px;font:normal 13px/18px 'Liberation Sans', sans-serif;color:#000;white-space:pre;letter-spacing:-0.150px;">876-543-210</span>
<span style="position:absolute;left:291.50px;top:569.10px;font:normal 13px/18px 'Liberation Sans', sans-serif;color:#000;white-space:pre;letter-spacing:-0.015px;">990 Q, Street R,</span>
<span style="position:absolute;left:291.50px;top:589.30px;font:normal 13px/18px 'Liberation Sans', sans-serif;color:#000;white-space:pre;letter-spacing:0.948px;">Willowville</span>
<span style="position:absolute;left:399.40px;top:589.30px;font:normal 13px/18px 'Liberation Sans', sans-serif;color:#000;white-space:pre;letter-spacing:0.303px;">Academic</span>
<span style="position:absolute;left:508.30px;top:589.30px;font:normal 13px/18px 'Liberation Sans', sans-serif;color:#000;white-space:pre;letter-spacing:0.285px;">Senior section Teacher</span>
<span style="position:absolute;left:729.40px;top:589.30px;font:normal 13px/18px 'Liberation Sans', sans-serif;color:#000;white-space:pre;letter-spacing:-0.430px;">$265</span>
<span style="position:absolute;left:817.30px;top:589.30px;font:normal 13px/18px 'Liberation Sans', sans-serif;color:#000;white-space:pre;letter-spacing:0.262px;">Aug-21</span>
<span style="position:absolute;left:37.80px;top:629.30px;font:normal 13px/18px 'Liberation Sans', sans-serif;color:#000;white-space:pre;letter-spacing:0.255px;">Liz Donoghue</span>
<span style="position:absolute;left:183.50px;top:629.30px;font:normal 13px/18px 'Liberation Sans', sans-serif;color:#000;white-space:pre;letter-spacing:-0.150px;">432-108-765</span>
<span style="position:absolute;left:291.50px;top:609.10px;font:normal 13px/18px 'Liberation Sans', sans-serif;color:#000;white-space:pre;letter-spacing:-0.013px;">120 S, Street T,</span>
<span style="position:absolute;left:291.00px;top:629.30px;font:normal 13px/18px 'Liberation Sans', sans-serif;color:#000;white-space:pre;letter-spacing:0.646px;">Birchville</span>
<span style="position:absolute;left:399.40px;top:629.30px;font:normal 13px/18px 'Liberation Sans', sans-serif;color:#000;white-space:pre;letter-spacing:0.303px;">Academic</span>
<span style="position:absolute;left:508.30px;top:629.30px;font:normal 13px/18px 'Liberation Sans', sans-serif;color:#000;white-space:pre;letter-spacing:0.285px;">Senior section Teacher</span>
<span style="position:absolute;left:729.40px;top:629.30px;font:normal 13px/18px 'Liberation Sans', sans-serif;color:#000;white-space:pre;letter-spacing:-0.430px;">$260</span>
<span style="position:absolute;left:817.30px;top:629.30px;font:normal 13px/18px 'Liberation Sans', sans-serif;color:#000;white-space:pre;letter-spacing:0.262px;">Aug-21</span>
<span style="position:absolute;left:37.80px;top:669.30px;font:normal 13px/18px 'Liberation Sans', sans-serif;color:#000;white-space:pre;letter-spacing:0.370px;">Markus Hudson</span>
<span style="position:absolute;left:183.50px;top:669.30px;font:normal 13px/18px 'Liberation Sans', sans-serif;color:#000;white-space:pre;letter-spacing:-0.150px;">876-501-234</span>
<span style="position:absolute;left:291.50px;top:649.10px;font:normal 13px/18px 'Liberation Sans', sans-serif;color:#000;white-space:pre;letter-spacing:0.154px;">230 U, Street V,</span>
<span style="position:absolute;left:291.00px;top:669.30px;font:normal 13px/18px 'Liberation Sans', sans-serif;color:#000;white-space:pre;letter-spacing:0.742px;">Elmville</span>
<span style="position:absolute;left:399.40px;top:669.30px;font:normal 13px/18px 'Liberation Sans', sans-serif;color:#000;white-space:pre;letter-spacing:0.517px;">Other</span>
<span style="position:absolute;left:508.30px;top:669.30px;font:normal 13px/18px 'Liberation Sans', sans-serif;color:#000;white-space:pre;letter-spacing:0.285px;">Senior section Teacher</span>
<span style="position:absolute;left:729.40px;top:669.30px;font:normal 13px/18px 'Liberation Sans', sans-serif;color:#000;white-space:pre;letter-spacing:-0.430px;">$255</span>
<span style="position:absolute;left:817.30px;top:669.30px;font:normal 13px/18px 'Liberation Sans', sans-serif;color:#000;white-space:pre;letter-spacing:0.262px;">Aug-21</span>
<span style="position:absolute;left:37.80px;top:709.30px;font:normal 13px/18px 'Liberation Sans', sans-serif;color:#000;white-space:pre;letter-spacing:0.253px;">Rick Neeson</span>
<span style="position:absolute;left:183.50px;top:709.30px;font:normal 13px/18px 'Liberation Sans', sans-serif;color:#000;white-space:pre;letter-spacing:-0.150px;">432-105-678</span>
<span style="position:absolute;left:291.50px;top:689.10px;font:normal 13px/18px 'Liberation Sans', sans-serif;color:#000;white-space:pre;letter-spacing:0.114px;">450 W, Street X,</span>
<span style="position:absolute;left:291.00px;top:709.30px;font:normal 13px/18px 'Liberation Sans', sans-serif;color:#000;white-space:pre;letter-spacing:0.775px;">Firville</span>
<span style="position:absolute;left:399.40px;top:709.30px;font:normal 13px/18px 'Liberation Sans', sans-serif;color:#000;white-space:pre;letter-spacing:0.303px;">Academic</span>
<span style="position:absolute;left:507.80px;top:709.30px;font:normal 13px/18px 'Liberation Sans', sans-serif;color:#000;white-space:pre;letter-spacing:0.364px;">Primary Teacher</span>
<span style="position:absolute;left:729.40px;top:709.30px;font:normal 13px/18px 'Liberation Sans', sans-serif;color:#000;white-space:pre;letter-spacing:-0.430px;">$200</span>
<span style="position:absolute;left:817.30px;top:709.30px;font:normal 13px/18px 'Liberation Sans', sans-serif;color:#000;white-space:pre;letter-spacing:0.262px;">Aug-19</span>
<span style="position:absolute;left:38.30px;top:749.30px;font:normal 13px/18px 'Liberation Sans', sans-serif;color:#000;white-space:pre;letter-spacing:0.205px;">Sadie Wesley</span>
<span style="position:absolute;left:183.50px;top:749.30px;font:normal 13px/18px 'Liberation Sans', sans-serif;color:#000;white-space:pre;letter-spacing:-0.150px;">678-901-234</span>
<span style="position:absolute;left:291.50px;top:729.10px;font:normal 13px/18px 'Liberation Sans', sans-serif;color:#000;white-space:pre;letter-spacing:-0.000px;">560 Y, Street Z,</span>
<span style="position:absolute;left:291.50px;top:749.30px;font:normal 13px/18px 'Liberation Sans', sans-serif;color:#000;white-space:pre;letter-spacing:0.896px;">ville</span>
<span style="position:absolute;left:399.40px;top:749.30px;font:normal 13px/18px 'Liberation Sans', sans-serif;color:#000;white-space:pre;letter-spacing:0.303px;">Academic</span>
<span style="position:absolute;left:508.30px;top:749.30px;font:normal 13px/18px 'Liberation Sans', sans-serif;color:#000;white-space:pre;letter-spacing:0.308px;">Junior section Teacher</span>
<span style="position:absolute;left:729.40px;top:749.30px;font:normal 13px/18px 'Liberation Sans', sans-serif;color:#000;white-space:pre;letter-spacing:-0.430px;">$200</span>
<span style="position:absolute;left:817.30px;top:749.30px;font:normal 13px/18px 'Liberation Sans', sans-serif;color:#000;white-space:pre;letter-spacing:0.262px;">Aug-20</span>
<span style="position:absolute;left:16.00px;top:6.93px;font:normal 12.6px/18px 'Liberation Sans', sans-serif;color:#4a4a4a;white-space:pre;letter-spacing:-0.263px;will-change:transform;">File</span>
<span style="position:absolute;left:68.00px;top:6.93px;font:normal 12.6px/18px 'Liberation Sans', sans-serif;color:#4a4a4a;white-space:pre;letter-spacing:0.470px;will-change:transform;">Home</span>
<span style="position:absolute;left:131.50px;top:6.93px;font:normal 12.6px/18px 'Liberation Sans', sans-serif;color:#3a3a3a;white-space:pre;letter-spacing:0.700px;-webkit-text-stroke:0.28px #3a3a3a;will-change:transform;">Insert</span>
<span style="position:absolute;left:195.00px;top:6.93px;font:normal 12.6px/18px 'Liberation Sans', sans-serif;color:#4a4a4a;white-space:pre;letter-spacing:0.058px;will-change:transform;">Page Layout</span>
<span style="position:absolute;left:296.30px;top:6.93px;font:normal 12.6px/18px 'Liberation Sans', sans-serif;color:#4a4a4a;white-space:pre;letter-spacing:0.145px;will-change:transform;">Formulas</span>
<span style="position:absolute;left:378.70px;top:6.93px;font:normal 12.6px/18px 'Liberation Sans', sans-serif;color:#4a4a4a;white-space:pre;letter-spacing:0.167px;will-change:transform;">Data</span>
<span style="position:absolute;left:434.10px;top:6.93px;font:normal 12.6px/18px 'Liberation Sans', sans-serif;color:#4a4a4a;white-space:pre;letter-spacing:-0.200px;will-change:transform;">Review</span>
<span style="position:absolute;left:502.60px;top:6.93px;font:normal 12.6px/18px 'Liberation Sans', sans-serif;color:#4a4a4a;white-space:pre;letter-spacing:-0.325px;will-change:transform;">View</span>
<span style="position:absolute;left:556.90px;top:6.93px;font:normal 12.6px/18px 'Liberation Sans', sans-serif;color:#4a4a4a;white-space:pre;letter-spacing:0.568px;will-change:transform;">Help</span>
<span style="position:absolute;left:653.20px;top:6.93px;font:normal 12.6px/18px 'Liberation Sans', sans-serif;color:#4a4a4a;white-space:pre;letter-spacing:0.331px;will-change:transform;">Tell me what you want to do</span>
<span style="position:absolute;left:85.00px;top:108.75px;font:normal 11.7px/18px 'Liberation Sans', sans-serif;color:#3b3a39;white-space:pre;letter-spacing:-0.488px;will-change:transform;">Tables</span>
<span style="position:absolute;left:567.50px;top:108.95px;font:normal 11.7px/18px 'Liberation Sans', sans-serif;color:#3b3a39;white-space:pre;letter-spacing:-0.131px;will-change:transform;">Add-ins</span>
<span style="position:absolute;left:859.80px;top:108.95px;font:normal 11.7px/18px 'Liberation Sans', sans-serif;color:#3b3a39;white-space:pre;letter-spacing:-0.576px;will-change:transform;">Charts</span>
<span style="position:absolute;left:10.50px;top:70.15px;font:normal 11.7px/18px 'Liberation Sans', sans-serif;color:#3b3a39;white-space:pre;letter-spacing:0.009px;will-change:transform;">PivotTable</span>
<span style="position:absolute;left:69.50px;top:70.15px;font:normal 11.7px/18px 'Liberation Sans', sans-serif;color:#3b3a39;white-space:pre;letter-spacing:0.124px;will-change:transform;">Recommended</span>
<span style="position:absolute;left:80.50px;top:86.15px;font:normal 11.7px/18px 'Liberation Sans', sans-serif;color:#3b3a39;white-space:pre;letter-spacing:-0.142px;will-change:transform;">PivotTables</span>
<span style="position:absolute;left:161.00px;top:70.15px;font:normal 11.7px/18px 'Liberation Sans', sans-serif;color:#3b3a39;white-space:pre;letter-spacing:-0.360px;will-change:transform;">Table</span>
<span style="position:absolute;left:213.75px;top:70.15px;font:normal 11.7px/18px 'Liberation Sans', sans-serif;color:#201f1e;white-space:pre;letter-spacing:-0.196px;will-change:transform;">Pictures</span>
<span style="position:absolute;left:260.60px;top:70.15px;font:normal 11.7px/18px 'Liberation Sans', sans-serif;color:#3b3a39;white-space:pre;letter-spacing:-0.699px;will-change:transform;">Shapes</span>
<span style="position:absolute;left:306.50px;top:70.15px;font:normal 11.7px/18px 'Liberation Sans', sans-serif;color:#3b3a39;white-space:pre;letter-spacing:0.027px;will-change:transform;">Icons</span>
<span style="position:absolute;left:364.00px;top:35.65px;font:normal 11.7px/18px 'Liberation Sans', sans-serif;color:#3b3a39;white-space:pre;letter-spacing:0.020px;will-change:transform;">SmartArt</span>
<span style="position:absolute;left:364.00px;top:58.95px;font:normal 11.7px/18px 'Liberation Sans', sans-serif;color:#3b3a39;white-space:pre;letter-spacing:-0.208px;will-change:transform;">Screenshot</span>
<span style="position:absolute;left:478.40px;top:45.15px;font:normal 11.7px/18px 'Liberation Sans', sans-serif;color:#3b3a39;white-space:pre;letter-spacing:0.063px;will-change:transform;">Get Add-ins</span>
<span style="position:absolute;left:478.40px;top:77.15px;font:normal 11.7px/18px 'Liberation Sans', sans-serif;color:#3b3a39;white-space:pre;letter-spacing:0.343px;will-change:transform;">My Add-ins</span>
<span style="position:absolute;left:565.40px;top:70.15px;font:normal 11.7px/18px 'Liberation Sans', sans-serif;color:#3b3a39;white-space:pre;letter-spacing:-0.306px;will-change:transform;">Visio Data</span>
<span style="position:absolute;left:567.50px;top:85.55px;font:normal 11.7px/18px 'Liberation Sans', sans-serif;color:#3b3a39;white-space:pre;letter-spacing:-0.262px;will-change:transform;">Visualizer</span>
<span style="position:absolute;left:642.40px;top:45.15px;font:normal 11.7px/18px 'Liberation Sans', sans-serif;color:#3b3a39;white-space:pre;letter-spacing:0.028px;will-change:transform;">Bing Maps</span>
<span style="position:absolute;left:642.40px;top:77.15px;font:normal 11.7px/18px 'Liberation Sans', sans-serif;color:#3b3a39;white-space:pre;letter-spacing:-0.120px;will-change:transform;">People Graph</span>
<span style="position:absolute;left:738.30px;top:70.15px;font:normal 11.7px/18px 'Liberation Sans', sans-serif;color:#3b3a39;white-space:pre;letter-spacing:0.154px;will-change:transform;">Recommended</span>
<span style="position:absolute;left:762.40px;top:85.55px;font:normal 11.7px/18px 'Liberation Sans', sans-serif;color:#3b3a39;white-space:pre;letter-spacing:-0.156px;will-change:transform;">Charts</span>
<span style="position:absolute;left:226.50px;top:114.15px;font:bold 11.7px/18px 'Liberation Sans', sans-serif;color:#262626;white-space:pre;letter-spacing:0.013px;z-index:5;will-change:transform;">Insert Picture From</span>
<span style="position:absolute;left:250.70px;top:143.15px;font:normal 11.7px/18px 'Liberation Sans', sans-serif;color:#262626;white-space:pre;letter-spacing:-0.273px;z-index:5;will-change:transform;">This Device...</span>
<span style="position:absolute;left:250.60px;top:171.15px;font:normal 11.7px/18px 'Liberation Sans', sans-serif;color:#262626;white-space:pre;letter-spacing:-0.067px;z-index:5;will-change:transform;">Online Pictures...</span>
<div style="position:absolute;left:211px;top:106px;width:153px;height:89px;background:#fff;border:1px solid #c8c6c4;box-sizing:border-box;box-shadow:0 2px 5px rgba(0,0,0,.28)"></div>
<div style="position:absolute;left:211px;top:136px;width:152px;height:30px;background:#d0cecc;border:3px solid #fb0007;box-sizing:border-box;border-radius:3px"></div>
<div style="position:absolute;left:274px;top:157px;width:8px;height:1px;background:#262626;z-index:6"></div>
<div style="position:absolute;left:250.5px;top:185px;width:8.5px;height:1px;background:#262626;z-index:6"></div>
<svg style="position:absolute;left:225px;top:143px;overflow:visible;z-index:6" width="17" height="17"><rect x="0.500" y="0.500" width="12" height="12" fill="#fff" stroke="#8a8886"/><circle cx="9" cy="3.600" r="1.300" fill="#e9b764"/><path d="M2 11v-3l2.500-3l2.500 3v3z" fill="#a6c4e6"/><rect x="6.500" y="6.500" width="9" height="6.500" fill="#fff" stroke="#4980b9" stroke-width="1.200"/><rect x="9.700" y="13" width="2.600" height="1.800" fill="#4980b9"/><rect x="8" y="14.600" width="6" height="1.200" fill="#4980b9"/></svg>
<svg style="position:absolute;left:225px;top:171px;overflow:visible;z-index:6" width="17" height="17"><rect x="0.500" y="0.500" width="12" height="12" fill="#fff" stroke="#8a8886"/><circle cx="9" cy="3.600" r="1.300" fill="#e9b764"/><path d="M2 11v-3l2.500-3l2.500 3v3z" fill="#a6c4e6"/><circle cx="11.500" cy="11.500" r="4.300" fill="#fff" stroke="#4980b9" stroke-width="1.200"/><ellipse cx="11.500" cy="11.500" rx="1.900" ry="4.300" fill="none" stroke="#4980b9" stroke-width="0.900"/><path d="M7.200 11.500h8.600M8 9.300h7M8 13.700h7" stroke="#4980b9" stroke-width="0.800"/></svg>
</div></body></html>
